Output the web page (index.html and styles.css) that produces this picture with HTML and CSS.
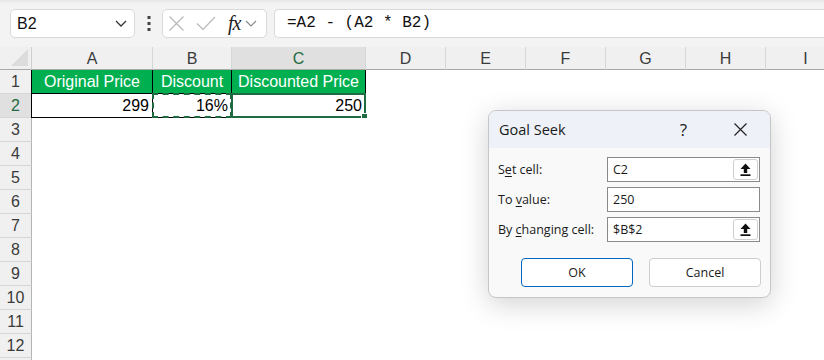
FILE: index.html
```html
<!DOCTYPE html>
<html lang="en">
<head>
    <meta charset="UTF-8">
    <meta name="viewport" content="width=device-width, initial-scale=1.0">
    <title>Goal Seek</title>
    <link rel="stylesheet" href="styles.css">
</head>
<body>
    <!-- Formula bar -->
    <div class="toolbar">
        <div class="namebox">
            <span>B2</span>
            <svg width="12" height="7" viewBox="0 0 12 7"><path d="M1 1 L6 6 L11 1" fill="none" stroke="#333" stroke-width="1.3"/></svg>
        </div>
        <div class="more">
            <svg width="4" height="15" viewBox="0 0 4 15"><rect x="0.5" y="0" width="3" height="3" fill="#444"/><rect x="0.5" y="6" width="3" height="3" fill="#444"/><rect x="0.5" y="12" width="3" height="3" fill="#444"/></svg>
        </div>
        <div class="fxbox">
            <svg class="cancel" width="17" height="15" viewBox="0 0 17 15"><path d="M1.5 0.5 L15.5 14.5 M15.5 0.5 L1.5 14.5" stroke="#b8b8b8" stroke-width="1.2" fill="none"/></svg>
            <svg class="enter" width="20" height="15" viewBox="0 0 20 15"><path d="M1 7.5 L7 13.5 L19 1" stroke="#b8b8b8" stroke-width="1.2" fill="none"/></svg>
            <span class="fx">fx</span>
            <svg width="12" height="7" viewBox="0 0 12 7"><path d="M1 1 L6 6 L11 1" fill="none" stroke="#888" stroke-width="1.1"/></svg>
        </div>
        <div class="formula">=A2 - (A2 * B2)</div>
    </div>

    <!-- Worksheet -->
    <div class="sheet">
        <div class="corner"><svg width="17" height="17" viewBox="0 0 17 17"><path d="M17 0 L17 17 L0 17 Z" fill="#dcdcdc"/></svg></div>
        <div class="colhead">A</div>
        <div class="colhead">B</div>
        <div class="colhead active">C</div>
        <div class="colhead">D</div>
        <div class="colhead">E</div>
        <div class="colhead">F</div>
        <div class="colhead">G</div>
        <div class="colhead">H</div>
        <div class="colhead">I</div>

        <div class="rowhead">1</div>
        <div class="cell title first">Original Price</div>
        <div class="cell title">Discount</div>
        <div class="cell title">Discounted Price</div>
        <div class="blank"></div><div class="blank"></div><div class="blank"></div><div class="blank"></div><div class="blank"></div><div class="blank"></div>

        <div class="rowhead active">2</div>
        <div class="cell num first">299</div>
        <div class="cell num copied">16%</div>
        <div class="cell num selected">250</div>
        <div class="blank"></div><div class="blank"></div><div class="blank"></div><div class="blank"></div><div class="blank"></div><div class="blank"></div>
    </div>
    <div class="rows" id="rows"></div>
    <div class="rowhead tail"></div>

    <!-- Goal Seek dialog -->
    <div class="dialog">
        <div class="dialog-title">
            <span class="caption">Goal Seek</span>
            <span class="help">?</span>
            <svg class="close" width="13" height="13" viewBox="0 0 13 13"><path d="M0.5 0.5 L12.5 12.5 M12.5 0.5 L0.5 12.5" stroke="#222" stroke-width="1.2" fill="none"/></svg>
        </div>
        <div class="dialog-body">
            <label>S<u>e</u>t cell:</label>
            <div class="field">
                <span>C2</span>
                <div class="refbtn"><svg width="11" height="13" viewBox="0 0 11 13"><path d="M5.5 0.5 L10.5 6 L7.2 6 L7.2 10 L3.8 10 L3.8 6 L0.5 6 Z" fill="#111"/><rect x="0.5" y="11.3" width="10" height="1.7" fill="#111"/></svg></div>
            </div>
            <label>To <u>v</u>alue:</label>
            <div class="field"><span>250</span></div>
            <label>By <u>c</u>hanging cell:</label>
            <div class="field">
                <span>$B$2</span>
                <div class="refbtn"><svg width="11" height="13" viewBox="0 0 11 13"><path d="M5.5 0.5 L10.5 6 L7.2 6 L7.2 10 L3.8 10 L3.8 6 L0.5 6 Z" fill="#111"/><rect x="0.5" y="11.3" width="10" height="1.7" fill="#111"/></svg></div>
            </div>
        </div>
        <div class="dialog-buttons">
            <button class="button primary">OK</button>
            <button class="button">Cancel</button>
        </div>
    </div>

    <script>
        // empty rows 3..12, same columns as above
        var rows = document.getElementById('rows');
        for (var r = 3; r <= 12; r++) {
            var head = document.createElement('div');
            head.className = 'rowhead';
            head.textContent = r;
            rows.appendChild(head);
            for (var c = 0; c < 9; c++) {
                var cell = document.createElement('div');
                cell.className = 'blank';
                rows.appendChild(cell);
            }
        }
    </script>
</body>
</html>
```

FILE: styles.css
```css
/* Excel window with the Goal Seek dialog */
html, body {
    margin: 0;
    padding: 0;
    width: 824px;
    height: 360px;
    overflow: hidden;
    background: #fff;
    font-family: "Liberation Sans", Arial, sans-serif;
}
.toolbar {
    height: 47px;
    box-sizing: border-box;
    padding: 9px 0 0 10px;
    display: flex;
    align-items: flex-start;
    background: linear-gradient(#e6e6e6, #f3f3f3 4px);
    white-space: nowrap;
    overflow: hidden;
}
.namebox {
    width: 125px;
    height: 29px;
    box-sizing: border-box;
    border: 1px solid #d9d9d9;
    border-radius: 5px;
    background: #fff;
    display: flex;
    align-items: center;
    justify-content: space-between;
    padding: 0 7px 0 6px;
    font-size: 16px;
    color: #111;
}
.more {
    width: 27px;
    height: 29px;
    display: flex;
    align-items: center;
    justify-content: center;
}
.fxbox {
    width: 105px;
    height: 29px;
    box-sizing: border-box;
    border: 1px solid #d9d9d9;
    border-radius: 5px;
    background: #fff;
    display: flex;
    align-items: center;
    padding-left: 5px;
}
.fxbox .enter {
    margin-left: 11px;
}
.fx {
    font-family: "Liberation Serif", serif;
    font-style: italic;
    font-size: 20px;
    color: #222;
    margin: 0 5px 0 12px;
    letter-spacing: -1px;
}
.formula {
    margin-left: 7px;
    flex: 1;
    height: 29px;
    box-sizing: border-box;
    border: 1px solid #d9d9d9;
    border-right: none;
    border-radius: 5px 0 0 5px;
    background: #fff;
    padding-left: 12px;
    line-height: 27px;
    font-family: "Liberation Mono", monospace;
    font-size: 16px;
    color: #111;
}

/* grid */
.sheet, .rows {
    display: grid;
    grid-template-columns: 32px 121px 79px 134px repeat(6, 80px);
    overflow: hidden;
}
.sheet {
    grid-template-rows: 23px 24px 24px;
}
.rows {
    grid-auto-rows: 24px;
}
.corner {
    background: #f0f0f0;
    border-bottom: 1px solid #a9a9a9;
    border-right: 1px solid #cfcfcf;
    display: flex;
    align-items: flex-end;
    justify-content: flex-end;
    padding: 0 3px 3px 0;
    box-sizing: border-box;
}
.colhead {
    background: #f0f0f0;
    border-bottom: 1px solid #a9a9a9;
    border-right: 1px solid #d6d6d6;
    box-sizing: border-box;
    text-align: center;
    font-size: 16px;
    line-height: 23px;
    color: #3b3b3b;
}
.colhead.active {
    background: #e0e0e0;
    color: #1e6b41;
}
.rowhead {
    background: #f0f0f0;
    border-bottom: 1px solid #d6d6d6;
    border-right: 1px solid #b4b4b4;
    box-sizing: border-box;
    text-align: center;
    font-size: 16px;
    line-height: 24px;
    color: #3b3b3b;
}
.rowhead.active {
    background: #e0e0e0;
    color: #1e6b41;
}
.rowhead.tail {
    width: 32px;
    height: 2px;
    border-bottom: none;
}
.cell {
    position: relative;
    box-sizing: border-box;
    border-right: 1px solid #000;
    border-bottom: 1px solid #000;
    font-size: 16px;
    line-height: 23px;
    padding: 0 3px;
    white-space: nowrap;
    color: #000;
}
.cell.first {
    border-left: 1px solid #000;
    margin-left: -1px;
}
.title {
    background: #00b050;
    color: #fff;
    text-align: center;
}
.num {
    text-align: right;
}
.copied::after {
    content: "";
    position: absolute;
    inset: -1px -1px -1px -1px;
    border: 2px dashed #1e6b41;
}
.selected::after {
    content: "";
    position: absolute;
    inset: -1px -1px -1px -1px;
    border: 2px solid #1e6b41;
}
.selected::before {
    content: "";
    position: absolute;
    right: -3px;
    bottom: -3px;
    width: 5px;
    height: 5px;
    background: #1e6b41;
    border: 1px solid #fff;
    z-index: 2;
}

/* dialog */
.dialog {
    position: absolute;
    left: 488px;
    top: 110px;
    width: 283px;
    height: 188px;
    box-sizing: border-box;
    border: 1px solid #c6c6c6;
    border-radius: 8px;
    background: #f9f9f9;
    box-shadow: 0 6px 28px rgba(0, 0, 0, 0.18);
    overflow: hidden;
    font-family: "Open Sans", "Segoe UI", sans-serif;
    font-size: 12.5px;
    color: #1a1a1a;
}
.dialog-title {
    height: 37px;
    background: #eef1f8;
    display: flex;
    align-items: center;
    padding: 0 0 0 10px;
}
.caption {
    font-size: 14.5px;
    flex: 1;
}
.help {
    font-size: 17px;
    margin-right: 47px;
}
.close {
    margin-right: 23px;
}
.dialog-body {
    display: grid;
    grid-template-columns: 109px 153px;
    grid-auto-rows: 25px;
    row-gap: 5px;
    padding: 9px 9px 0 9px;
    align-items: center;
}
.dialog-body u {
    text-decoration-thickness: 1px;
    text-underline-offset: 2px;
}
.field {
    height: 25px;
    box-sizing: border-box;
    border: 1px solid #8a8a8a;
    background: #fff;
    display: flex;
    align-items: center;
    justify-content: space-between;
    padding: 0 1px 0 5px;
}
.refbtn {
    width: 25px;
    height: 21px;
    box-sizing: border-box;
    border: 1px solid #cfcfcf;
    border-radius: 3px;
    background: #fff;
    display: flex;
    align-items: center;
    justify-content: center;
}
.dialog-buttons {
    display: flex;
    justify-content: flex-end;
    gap: 16px;
    padding: 16px 9px 0 0;
}
.button {
    width: 112px;
    height: 29px;
    box-sizing: border-box;
    border: 1px solid #cdcdcd;
    border-radius: 4px;
    background: #fff;
    font-family: "Open Sans", "Segoe UI", sans-serif;
    font-size: 12.5px;
    color: #1a1a1a;
}
.button.primary {
    border-color: #0067c0;
}
```
